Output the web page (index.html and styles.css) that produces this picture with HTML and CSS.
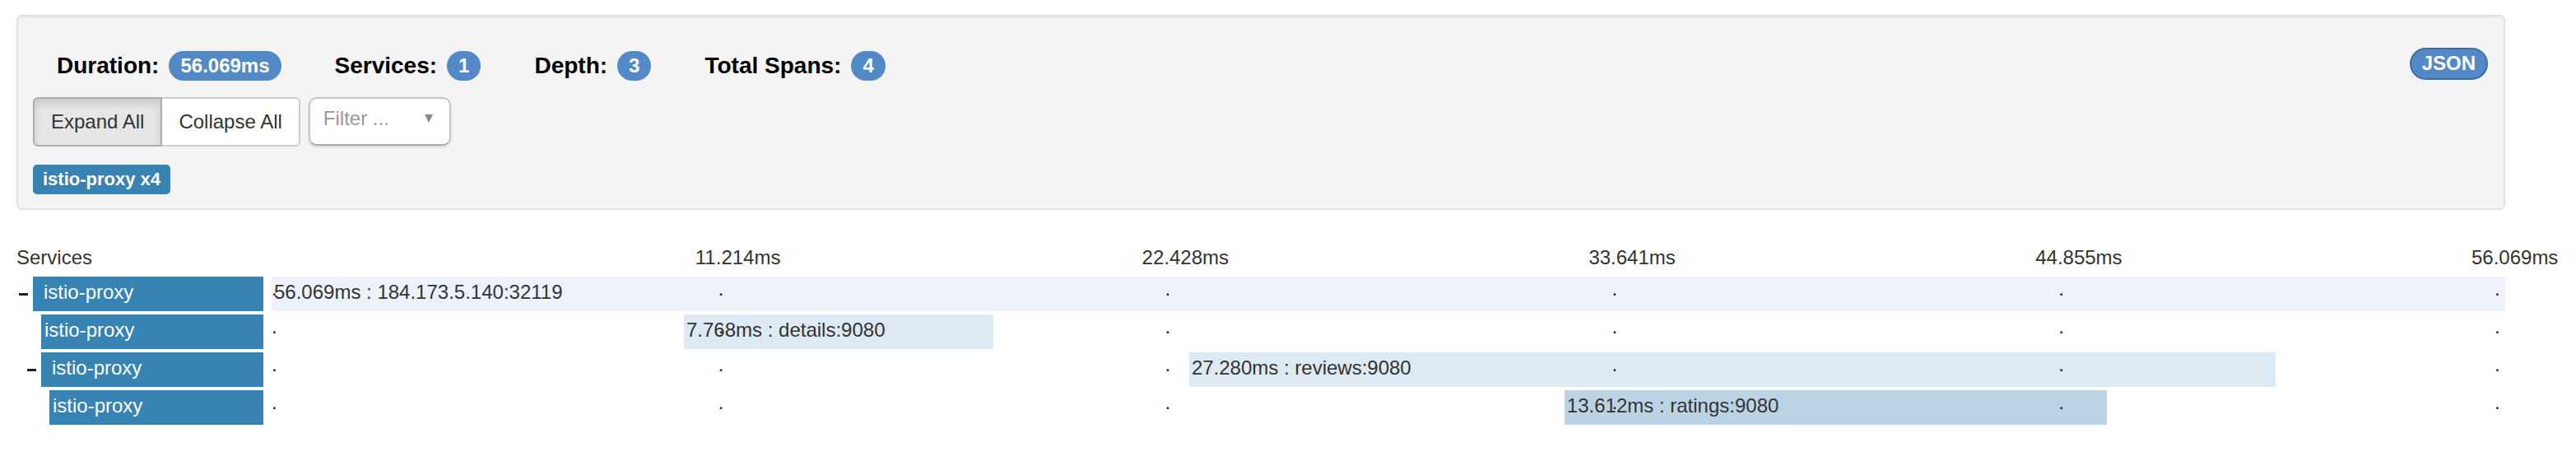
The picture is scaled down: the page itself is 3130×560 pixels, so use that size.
FILE: index.html
```html
<!DOCTYPE html>
<html>
<head>
<meta charset="utf-8">
<title>Trace</title>
<link rel="stylesheet" href="styles.css">
</head>
<body>
<div class="page">
  <div class="well">
    <div class="summary">
      <span class="stat"><span class="stat-label">Duration:</span><span class="badge">56.069ms</span></span>
      <span class="stat"><span class="stat-label">Services:</span><span class="badge">1</span></span>
      <span class="stat"><span class="stat-label">Depth:</span><span class="badge">3</span></span>
      <span class="stat"><span class="stat-label">Total Spans:</span><span class="badge">4</span></span>
      <span class="badge json">JSON</span>
    </div>
    <div class="controls">
      <div class="btn-group">
        <button class="btn active">Expand All</button><button class="btn">Collapse All</button>
      </div>
      <div class="filter">
        <span class="filter-placeholder">Filter ...</span>
        <span class="caret"></span>
      </div>
    </div>
    <div class="tags">
      <span class="service-tag">istio-proxy x4</span>
    </div>
  </div>

  <div class="trace">
    <div class="trace-header">
      <div class="svc-head">Services</div>
      <div class="scale">
        <span class="tick t1">11.214ms</span>
        <span class="tick t2">22.428ms</span>
        <span class="tick t3">33.641ms</span>
        <span class="tick t4">44.855ms</span>
        <span class="tick t5">56.069ms</span>
      </div>
    </div>

    <div class="row">
      <div class="svc-cell d0">
        <div class="expander"><span class="minus"></span></div>
        <div class="svc parent">istio-proxy</div>
      </div>
      <div class="timeline">
        <div class="span-bar c1" style="margin-left:0%;width:100%">56.069ms : 184.173.5.140:32119</div>
        <span class="mark m0">.</span><span class="mark m1">.</span><span class="mark m2">.</span><span class="mark m3">.</span><span class="mark m4">.</span><span class="mark m5">.</span>
      </div>
    </div>

    <div class="row">
      <div class="svc-cell d1">
        <div class="expander"></div>
        <div class="svc">istio-proxy</div>
      </div>
      <div class="timeline">
        <div class="span-bar c2" style="margin-left:18.46%;width:13.854%">7.768ms : details:9080</div>
        <span class="mark m0">.</span><span class="mark m1">.</span><span class="mark m2">.</span><span class="mark m3">.</span><span class="mark m4">.</span><span class="mark m5">.</span>
      </div>
    </div>

    <div class="row">
      <div class="svc-cell d1">
        <div class="expander"><span class="minus"></span></div>
        <div class="svc parent">istio-proxy</div>
      </div>
      <div class="timeline">
        <div class="span-bar c2" style="margin-left:41.08%;width:48.655%">27.280ms : reviews:9080</div>
        <span class="mark m0">.</span><span class="mark m1">.</span><span class="mark m2">.</span><span class="mark m3">.</span><span class="mark m4">.</span><span class="mark m5">.</span>
      </div>
    </div>

    <div class="row">
      <div class="svc-cell d2">
        <div class="expander"></div>
        <div class="svc">istio-proxy</div>
      </div>
      <div class="timeline">
        <div class="span-bar c3" style="margin-left:57.88%;width:24.277%">13.612ms : ratings:9080</div>
        <span class="mark m0">.</span><span class="mark m1">.</span><span class="mark m2">.</span><span class="mark m3">.</span><span class="mark m4">.</span><span class="mark m5">.</span>
      </div>
    </div>
  </div>
</div>
</body>
</html>
```

FILE: styles.css
```css
* {
  box-sizing: border-box;
}

html,
body {
  margin: 0;
  padding: 0;
  background: #fff;
}

body {
  font-family: "Liberation Sans", Arial, Helvetica, sans-serif;
  font-size: 24px;
  color: #333;
}

.page {
  width: 3024px;
  margin-left: 20px;
  padding-top: 18px;
}

/* ---------- summary well ---------- */
.well {
  background: #f4f4f4;
  border: 2px solid #e3e3e3;
  border-radius: 6px;
  padding: 18px 18px 17px;
  margin-bottom: 41px;
  box-shadow: inset 0 2px 2px rgba(0, 0, 0, 0.04);
}

.summary {
  display: flex;
  align-items: center;
  height: 62px;
  padding: 22px 1px 0 29px;
}

.stat {
  display: flex;
  align-items: center;
  margin-right: 65px;
}

.stat-label {
  font-weight: bold;
  font-size: 28px;
  line-height: 40px;
  color: #000;
  margin-right: 12px;
}

.badge {
  display: inline-block;
  background: #5289c6;
  color: #fff;
  font-weight: bold;
  font-size: 24px;
  line-height: 24px;
  padding: 6px 14px;
  border-radius: 18px;
  white-space: nowrap;
}

.badge.json {
  margin-left: auto;
  align-self: flex-start;
  margin-top: -2px;
  border: 2px solid #3d6ea6;
  padding: 5px 13px 6px;
  border-radius: 20px;
}

.controls {
  display: flex;
  align-items: flex-start;
  margin-top: 18px;
}

.btn-group {
  display: flex;
}

.btn {
  font-family: "Liberation Sans", Arial, Helvetica, sans-serif;
  font-size: 24px;
  line-height: 36px;
  height: 60px;
  padding: 10px 20px;
  margin: 0;
  color: #333;
  background: #fff;
  border: 2px solid #ccc;
}

.btn-group .btn:first-child {
  border-radius: 6px 0 0 6px;
}

.btn-group .btn:last-child {
  border-radius: 0 6px 6px 0;
  margin-left: -2px;
}

.btn.active {
  background: #e6e6e6;
  border-color: #adadad;
  box-shadow: inset 0 6px 10px rgba(0, 0, 0, 0.125);
  position: relative;
  z-index: 1;
}

.filter {
  display: flex;
  align-items: flex-start;
  margin-left: 10px;
  width: 173px;
  height: 59px;
  padding: 6px 20px 0 16px;
  background: #fff;
  border: 2px solid #c6c6c6;
  border-bottom-color: #aaa;
  border-radius: 10px;
  box-shadow: 0 2px 3px rgba(0, 0, 0, 0.12);
}

.filter-placeholder {
  flex: 1;
  color: #999;
  line-height: 36px;
  white-space: nowrap;
}

.caret {
  margin-top: 13px;
  width: 0;
  height: 0;
  border-left: 5.5px solid transparent;
  border-right: 5.5px solid transparent;
  border-top: 10px solid #888;
}

.tags {
  margin-top: 22px;
  height: 36px;
}

.service-tag {
  display: inline-block;
  height: 36px;
  background: #3783b3;
  color: #fff;
  font-weight: bold;
  font-size: 22px;
  line-height: 36px;
  padding: 0 12px;
  border-radius: 5px;
  white-space: nowrap;
}

/* ---------- trace timeline ---------- */
.trace {
  width: 3024px;
}

.trace-header {
  display: flex;
  height: 40px;
  line-height: 34px;
}

.svc-head {
  width: 310px;
  flex: none;
}

.scale {
  position: relative;
  flex: 1;
}

.tick {
  position: absolute;
  top: 0;
  margin-left: -28px;
  white-space: nowrap;
}

.t1 { left: 20%; }
.t2 { left: 40%; }
.t3 { left: 60%; }
.t4 { left: 80%; }
.t5 { left: 99.52%; }

.row {
  display: flex;
  height: 42px;
  margin-bottom: 4px;
}

.svc-cell {
  width: 310px;
  flex: none;
  display: flex;
  padding-right: 10px;
}

.svc-cell.d0 { padding-left: 0; }
.svc-cell.d1 { padding-left: 10px; }
.svc-cell.d2 { padding-left: 20px; }

.expander {
  width: 20px;
  flex: none;
}

.minus {
  display: block;
  margin: 20px 0 0 3px;
  width: 11px;
  height: 3px;
  background: #1e1e1e;
}

.svc {
  flex: 1;
  height: 42px;
  background: #3783b3;
  color: #fff;
  line-height: 38px;
  padding: 0 0 4px 4px;
  white-space: nowrap;
  overflow: hidden;
}

.svc.parent {
  padding-left: 13px;
}

.timeline {
  flex: 1;
  position: relative;
}

.span-bar {
  height: 42px;
  line-height: 38px;
  padding: 0 0 4px 3px;
  white-space: nowrap;
  color: #333;
}

.span-bar.c1 { background: #edf2fa; }
.span-bar.c2 { background: #dde9f3; }
.span-bar.c3 { background: #bcd3e6; }

.mark {
  position: absolute;
  top: -6px;
  line-height: 42px;
  color: #222;
}

.m0 { left: 0%; }
.m1 { left: 20%; }
.m2 { left: 40%; }
.m3 { left: 60%; }
.m4 { left: 80%; }
.m5 { left: 99.52%; }
```
